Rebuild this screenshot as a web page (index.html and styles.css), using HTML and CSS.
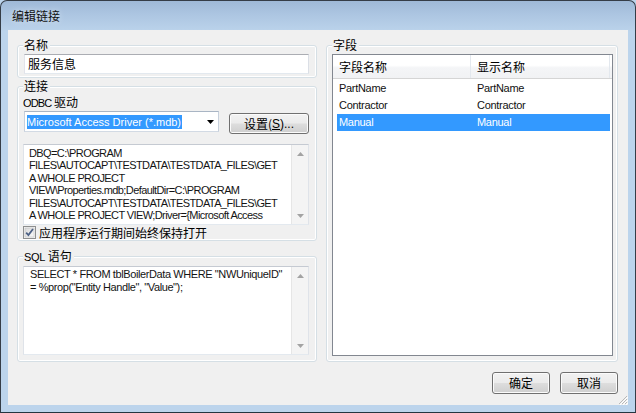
FILE: index.html
```html
<!DOCTYPE html>
<html lang="zh-CN">
<head>
<meta charset="utf-8">
<title>编辑链接</title>
<link rel="stylesheet" href="styles.css">
</head>
<body>
<div class="window">
  <div class="titlebar"><span class="title">编辑链接</span></div>
  <div class="client">
    <div class="main">
      <div class="left">
        <div class="group g-name">
          <span class="legend">名称</span>
          <div class="textbox name-input">服务信息</div>
        </div>
        <div class="group g-conn">
          <span class="legend">连接</span>
          <div class="odbc-label"><span class="lat">ODBC</span> 驱动</div>
          <div class="driver-row">
            <div class="combo">
              <span class="sel">Microsoft Access Driver (*.mdb)</span>
              <svg class="drop" width="7" height="4" viewBox="0 0 7 4"><path d="M0 0h7L3.5 4z" fill="#000"/></svg>
            </div>
            <button class="btn set-btn">设置(<u class="lat">S</u><span class="lat">)...</span></button>
          </div>
          <div class="memo conn-memo">
            <div class="memo-text">DBQ=C:\PROGRAM
FILES\AUTOCAPT\TESTDATA\TESTDATA_FILES\GET
A WHOLE PROJECT
VIEW\Properties.mdb;DefaultDir=C:\PROGRAM
FILES\AUTOCAPT\TESTDATA\TESTDATA_FILES\GET
A WHOLE PROJECT VIEW;Driver={Microsoft Access</div>
            <div class="vscroll">
              <span class="arr"><svg width="7" height="4" viewBox="0 0 7 4"><path d="M0 4h7L3.5 0z" fill="#a3a3a3"/></svg></span>
              <span class="arr"><svg width="7" height="4" viewBox="0 0 7 4"><path d="M0 0h7L3.5 4z" fill="#a3a3a3"/></svg></span>
            </div>
          </div>
          <label class="check">
            <svg class="cbox" width="13" height="13" viewBox="0 0 13 13">
              <defs><linearGradient id="cg" x1="0" y1="0" x2="1" y2="1"><stop offset="0" stop-color="#d8d8d8"/><stop offset="1" stop-color="#fafafa"/></linearGradient></defs>
              <rect x="0.5" y="0.5" width="12" height="12" fill="#f4f4f4" stroke="#8e8f8f"/>
              <rect x="2" y="2" width="9" height="9" fill="url(#cg)" stroke="#c0c0c0" stroke-width="0.6"/>
              <path d="M3.2 6.6l2.2 2.4 4.6-6" fill="none" stroke="#4d6185" stroke-width="1.8"/>
            </svg>
            <span>应用程序运行期间始终保持打开</span>
          </label>
        </div>
        <div class="group g-sql">
          <span class="legend"><span class="lat">SQL</span> 语句</span>
          <div class="memo sql-memo">
            <div class="memo-text">SELECT * FROM tblBoilerData WHERE "NWUniqueID"
= %prop("Entity Handle", "Value");</div>
            <div class="vscroll">
              <span class="arr"><svg width="7" height="4" viewBox="0 0 7 4"><path d="M0 4h7L3.5 0z" fill="#a3a3a3"/></svg></span>
              <span class="arr"><svg width="7" height="4" viewBox="0 0 7 4"><path d="M0 0h7L3.5 4z" fill="#a3a3a3"/></svg></span>
            </div>
          </div>
        </div>
      </div>
      <div class="group g-fields">
        <span class="legend">字段</span>
        <div class="listview">
          <div class="lv-header">
            <div class="lv-col c1">字段名称</div>
            <div class="lv-col c2">显示名称</div>
          </div>
          <div class="lv-rows">
            <div class="lv-row"><span>PartName</span><span>PartName</span></div>
            <div class="lv-row"><span>Contractor</span><span>Contractor</span></div>
            <div class="lv-row selected"><span>Manual</span><span>Manual</span></div>
          </div>
        </div>
      </div>
    </div>
    <div class="footer">
      <button class="btn dlg-btn">确定</button>
      <button class="btn dlg-btn">取消</button>
    </div>
    <svg class="grip" width="12" height="12" viewBox="0 0 12 12">
      <path d="M11 3L3 11M11 6L6 11M11 9L9 11" stroke="#b8b8b8" stroke-width="1"/>
      <path d="M12 4L4 12M12 7L7 12M12 10L10 12" stroke="#ffffff" stroke-width="1"/>
    </svg>
  </div>
</div>
</body>
</html>
```
FILE: styles.css
```css
html, body {
  margin: 0;
  padding: 0;
  background: #bcd4ec;
}

body {
  font-family: "Noto Sans CJK SC", "Liberation Sans", sans-serif;
  font-size: 12px;
  color: #000;
}

.lat {
  font-family: "Liberation Sans", sans-serif;
  font-size: 11px;
}

.window {
  width: 636px;
  height: 413px;
  box-sizing: border-box;
  border: 1px solid #353d47;
  border-bottom-color: #233540;
  border-radius: 7px 7px 0 0;
  background: linear-gradient(#9fb9d7 0px, #adc6e2 14px, #bad2ea 29px, #bcd4ec 30px, #bcd4ec 100%);
  display: flex;
  flex-direction: column;
  padding: 0 7px 7px 7px;
  overflow: hidden;
}

.titlebar {
  height: 29px;
  flex: none;
  display: flex;
  align-items: center;
  padding-left: 4px;
}

.title {
  font-size: 12px;
  line-height: 16px;
  color: #111;
  text-shadow: 0 0 6px rgba(255, 255, 255, 0.6);
}

.client {
  flex: 1;
  background: #f0f0f0;
  display: flex;
  flex-direction: column;
  position: relative;
}

.main {
  display: flex;
  gap: 9px;
  padding: 15px 10px 0 9px;
}

.left {
  width: 300px;
  display: flex;
  flex-direction: column;
}

.group {
  position: relative;
  box-sizing: border-box;
  border: 1px solid #d5dfe5;
  border-radius: 3px;
  box-shadow: inset 0 0 0 1px #ffffff;
}

.legend {
  position: absolute;
  top: -9px;
  left: 5px;
  padding: 0 2px 0 1px;
  background: #f0f0f0;
  font-size: 12px;
  line-height: 16px;
  white-space: nowrap;
}

.legend .lat {
  letter-spacing: -0.3px;
}

.g-name {
  height: 33px;
  padding: 8px 7px 0 6px;
}

.textbox {
  box-sizing: border-box;
  background: #fff;
  border: 1px solid;
  border-color: #abadb3 #dbdfe6 #e3e9ef #e2e3ea;
}

.name-input {
  height: 20px;
  padding-left: 3px;
  line-height: 17px;
  font-size: 12px;
}

.g-conn {
  margin-top: 8px;
  height: 155px;
  padding: 7px 7px 0 5px;
}

.odbc-label {
  height: 16px;
  line-height: 16px;
  font-size: 12px;
}

.odbc-label .lat {
  letter-spacing: -0.9px;
}

.driver-row {
  display: flex;
  align-items: flex-start;
  margin-top: 1px;
}

.combo {
  box-sizing: border-box;
  width: 195px;
  height: 21px;
  margin-left: 1px;
  background: #fff;
  border: 1px solid;
  border-color: #a9b5c4 #c7d0dc #d2dae4 #c7d0dc;
  display: flex;
  align-items: center;
  padding-left: 2px;
}

.sel {
  font-family: "Liberation Sans", sans-serif;
  font-size: 11px;
  line-height: 14px;
  background: #3399ff;
  color: #fff;
  padding: 0 1px 0 0;
}

.drop {
  margin-left: auto;
  margin-right: 4px;
}

.btn {
  box-sizing: border-box;
  border: 1px solid #707070;
  border-radius: 3px;
  background: linear-gradient(#f2f2f2 0%, #ebebeb 48%, #dddddd 52%, #cfcfcf 100%);
  box-shadow: inset 0 0 0 1px #fbfbfb;
  font-family: "Noto Sans CJK SC", "Liberation Sans", sans-serif;
  font-size: 12px;
  line-height: 16px;
  color: #000;
  padding: 0;
  margin: 0;
  display: flex;
  align-items: center;
  justify-content: center;
}

.set-btn {
  width: 80px;
  height: 21px;
  margin-left: 10px;
  margin-top: 2px;
}

.set-btn .lat {
  font-size: 12px;
  text-decoration-thickness: 1px;
}

.memo {
  box-sizing: border-box;
  width: 286px;
  background: #fff;
  border: 1px solid;
  border-color: #c5cad2 #dfe3e9 #e3e9ef #dfe3e9;
  display: flex;
}

.memo-text {
  flex: 1;
  white-space: pre;
  overflow: hidden;
  font-family: "Liberation Sans", sans-serif;
  font-size: 11px;
  color: #141414;
}

.conn-memo {
  height: 81px;
  margin-top: 10px;
}

.conn-memo .memo-text {
  padding: 2px 0 0 5px;
  line-height: 12.4px;
  letter-spacing: -0.6px;
}

.vscroll {
  width: 17px;
  flex: none;
  background: #f4f4f4;
  border-left: 1px solid #e6e6e6;
  box-sizing: border-box;
  display: flex;
  flex-direction: column;
  justify-content: space-between;
}

.arr {
  height: 17px;
  display: flex;
  align-items: center;
  justify-content: center;
}

.check {
  display: flex;
  align-items: center;
  gap: 3px;
  margin-top: 1px;
  height: 13px;
  font-size: 12px;
  line-height: 13px;
}

.cbox {
  flex: none;
}

.g-sql {
  margin-top: 15px;
  height: 106px;
  padding: 9px 7px 0 5px;
}

.sql-memo {
  height: 89px;
}

.sql-memo .memo-text {
  padding: 1px 0 0 6px;
  line-height: 13px;
  letter-spacing: -0.4px;
}

.g-fields {
  width: 292px;
  height: 317px;
  padding: 8px 0 0 5px;
}

.listview {
  box-sizing: border-box;
  width: 281px;
  height: 302px;
  border: 1px solid #828790;
  background: #fff;
}

.lv-header {
  display: flex;
  height: 24px;
  box-sizing: border-box;
  border-bottom: 1px solid #d5d5d5;
  background: linear-gradient(#ffffff 0%, #ffffff 45%, #f4f5f7 55%, #f1f2f4 100%);
}

.lv-col {
  font-size: 12px;
  line-height: 23px;
  box-sizing: border-box;
}

.lv-col.c1 {
  width: 138px;
  padding-left: 6px;
  border-right: 1px solid #e3e8ee;
}

.lv-col.c2 {
  flex: 1;
  padding-left: 6px;
  margin-right: 2px;
  border-right: 1px solid #e3e8ee;
}

.lv-rows {
  padding: 1px 2px 0 4px;
}

.lv-row {
  display: grid;
  grid-template-columns: 138px 1fr;
  height: 17px;
  padding-left: 2px;
  font-family: "Liberation Sans", sans-serif;
  font-size: 11px;
  line-height: 17px;
  letter-spacing: -0.3px;
  color: #111;
}

.lv-row.selected {
  background: #3399ff;
  color: #fff;
}

.footer {
  display: flex;
  justify-content: flex-end;
  gap: 10px;
  padding: 10px 10px 0 0;
}

.dlg-btn {
  width: 58px;
  height: 22px;
}

.grip {
  position: absolute;
  right: 0;
  bottom: 0;
}
```
